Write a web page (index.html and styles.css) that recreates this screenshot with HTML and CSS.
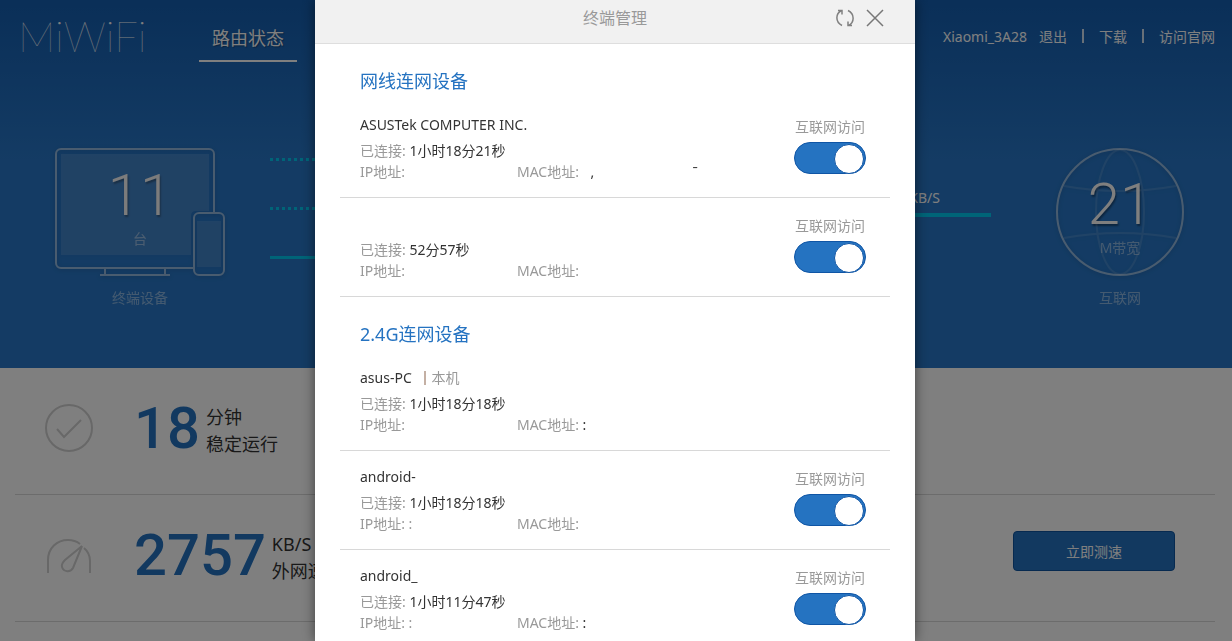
FILE: index.html
```html
<!DOCTYPE html>
<html lang="zh-CN">
<head>
    <meta charset="UTF-8">
    <meta name="viewport" content="width=device-width, initial-scale=1.0">
    <title>小米路由器</title>
    <link rel="stylesheet" href="styles.css">
</head>
<body>

<div class="hero">
    <!-- Header -->
    <header class="header">
        <a class="logo" href="#">MiWiFi</a>
        <nav class="nav">
            <a class="active" href="#">路由状态</a>
        </nav>
        <div class="user-nav">
            <span class="router-name">Xiaomi_3A28</span>
            <a href="#">退出</a>
            <span class="sep"></span>
            <a href="#">下载</a>
            <span class="sep"></span>
            <a href="#">访问官网</a>
        </div>
    </header>

    <!-- Network map -->
    <section class="network">
        <div class="node">
            <div class="figure">
                <svg width="170" height="130" viewBox="0 0 170 130" fill="none" stroke="#fff" stroke-width="2">
                    <g opacity=".5">
                        <path d="M139 120H6a5 5 0 0 1-5-5V6a5 5 0 0 1 5-5h148a5 5 0 0 1 5 5v59"/>
                        <path d="M45 127h70M50 121v6M110 121v6"/>
                        <rect x="139" y="65" width="30" height="62" rx="5"/>
                    </g>
                    <path d="M6 6h148v57h-13q-5 0-5 5v39H6z" fill="#fff" stroke="none" opacity=".12"/>
                    <path d="M142 73h24v46h-24z" fill="#fff" stroke="none" opacity=".12"/>
                </svg>
                <div class="count">
                    <span class="num">11</span>
                    <span class="unit">台</span>
                </div>
            </div>
            <p class="node-label">终端设备</p>
        </div>

        <div class="links">
            <div class="link-types">
                <span class="link dotted"></span>
                <span class="link dotted"></span>
                <span class="link"></span>
            </div>
            <div class="link-speed">KB/S</div>
        </div>

        <div class="node">
            <div class="figure">
                <svg width="130" height="130" viewBox="0 0 130 130" fill="none" stroke="#fff" stroke-width="2">
                    <circle cx="65" cy="64" r="63" opacity=".5"/>
                    <g opacity=".12">
                        <ellipse cx="65" cy="64" rx="24" ry="62"/>
                        <path d="M9 38q56 10 112 0M9 90q56-10 112 0"/>
                    </g>
                </svg>
                <div class="count low">
                    <span class="num">21</span>
                    <span class="unit">M带宽</span>
                </div>
            </div>
            <p class="node-label">互联网</p>
        </div>
    </section>
</div>

<!-- Stats -->
<main class="stats">
    <div class="stat">
        <svg class="stat-icon" width="48" height="48" viewBox="0 0 48 48" fill="none" stroke="#d0d0d0" stroke-width="2">
            <circle cx="24" cy="24" r="23"/>
            <path d="M12 25l7 8 17-17"/>
        </svg>
        <strong class="stat-num">18</strong>
        <p class="stat-text">分钟<br>稳定运行</p>
    </div>
    <div class="stat">
        <svg class="stat-icon" width="48" height="48" viewBox="0 0 48 48" fill="none" stroke="#d0d0d0" stroke-width="2">
            <path d="M3 42V29C3 17 12 9 23 9q7 0 12 4M39 17q6 5 6 13v12"/>
            <path d="M37 15L20 29q-4 4-3 7a6 6 0 0 0 11 1z"/>
        </svg>
        <strong class="stat-num">2757</strong>
        <p class="stat-text">KB/S<br>外网速度</p>
        <div class="stat-action">
            <button class="btn" type="button">立即测速</button>
        </div>
    </div>
</main>

<!-- Device dialog -->
<div class="overlay">
    <div class="dialog" role="dialog" aria-labelledby="dialog-title">
        <div class="dialog-header">
            <h2 id="dialog-title">终端管理</h2>
            <div class="dialog-tools">
                <button type="button" aria-label="刷新">
                    <svg width="18" height="18" viewBox="0 0 18 18" fill="none" stroke="#808080" stroke-width="1.5">
                        <path d="M6 16.500C-1 13-.5 4.500 5.500 1.500M2 1.500h4v4"/>
                        <path d="M12 1.500C19 5 18.500 13.500 12.500 16.500M16 16.500h-4v-4"/>
                    </svg>
                </button>
                <button type="button" aria-label="关闭">
                    <svg width="18" height="18" viewBox="0 0 18 18" fill="none" stroke="#777" stroke-width="1.500">
                        <path d="M1 1l16 16M17 1L1 17"/>
                    </svg>
                </button>
            </div>
        </div>

        <div class="dialog-body">
            <h3>网线连网设备</h3>
            <ul class="devices">
                <li class="device">
                    <div class="info">
                        <p class="name">ASUSTek COMPUTER INC.</p>
                        <p>已连接: <b>1小时18分21秒</b></p>
                        <p class="addr"><span>IP地址:</span><span>MAC地址: <b class="mac"><i>,</i><i>ˉ</i></b></span></p>
                    </div>
                    <label class="access">互联网访问<input class="switch" type="checkbox" checked></label>
                </li>
                <li class="device">
                    <div class="info">
                        <p class="name"></p>
                        <p>已连接: <b>52分57秒</b></p>
                        <p class="addr"><span>IP地址:</span><span>MAC地址:</span></p>
                    </div>
                    <label class="access">互联网访问<input class="switch" type="checkbox" checked></label>
                </li>
            </ul>

            <h3>2.4G连网设备</h3>
            <ul class="devices">
                <li class="device">
                    <div class="info">
                        <p class="name">asus-PC <span class="self">本机</span></p>
                        <p>已连接: <b>1小时18分18秒</b></p>
                        <p class="addr"><span>IP地址:</span><span>MAC地址: <b>:</b></span></p>
                    </div>
                </li>
                <li class="device">
                    <div class="info">
                        <p class="name">android-</p>
                        <p>已连接: <b>1小时18分18秒</b></p>
                        <p class="addr"><span>IP地址: :</span><span>MAC地址:</span></p>
                    </div>
                    <label class="access">互联网访问<input class="switch" type="checkbox" checked></label>
                </li>
                <li class="device">
                    <div class="info">
                        <p class="name">android_</p>
                        <p>已连接: <b>1小时11分47秒</b></p>
                        <p class="addr"><span>IP地址: :</span><span>MAC地址: <b>:</b></span></p>
                    </div>
                    <label class="access">互联网访问<input class="switch" type="checkbox" checked></label>
                </li>
            </ul>
        </div>
    </div>
</div>

</body>
</html>
```

FILE: styles.css
```css
/* Basic Reset */
* {
    margin: 0;
    padding: 0;
    box-sizing: border-box;
}
body {
    font-family: "Noto Sans", "Noto Sans CJK SC", sans-serif;
    font-size: 14px;
    color: #333;
    background: #fff;
}
a {
    color: inherit;
    text-decoration: none;
}
ul {
    list-style: none;
}
button {
    font: inherit;
    border: none;
    background: none;
    cursor: pointer;
}
svg {
    display: block;
}

/* Hero */
.hero {
    min-height: 368px;
    padding: 0 17px 0 15px;
    color: #fff;
    background: #2877c8 linear-gradient(#145eb0, #2877c8) no-repeat;
    background-size: 100% 160px;
}
.header {
    display: flex;
    height: 80px;
}
.logo {
    width: 184px;
    padding-left: 3px;
    font-family: Lato, sans-serif;
    font-size: 42px;
    font-weight: 200;
    line-height: 72px;
}
.nav a {
    display: block;
    padding: 24px 13px 8px;
    font-size: 18px;
    line-height: 28px;
    text-shadow: 1px 1px 1px rgba(0, 0, 0, 0.3);
}
.nav .active {
    border-bottom: 2px solid #fff;
}
.user-nav {
    display: flex;
    align-items: center;
    height: 72px;
    margin-left: auto;
}
.router-name {
    margin-right: 12px;
}
.sep {
    width: 2px;
    height: 14px;
    margin: 0 15px;
    background: #fff;
    opacity: 0.8;
}

/* Network map */
.network {
    display: grid;
    grid-template-columns: 250px 1fr 190px;
    padding-top: 68px;
}
.node {
    text-align: center;
}
.figure {
    display: grid;
    justify-items: center;
}
.figure > * {
    grid-area: 1 / 1;
}
.figure svg {
    filter: drop-shadow(0 1px 2px rgba(0, 0, 0, 0.3));
}
.count {
    display: flex;
    flex-direction: column;
    gap: 4px;
    padding-top: 17px;
}
.count.low {
    padding-top: 26px;
}
.num {
    font-family: Roboto, sans-serif;
    font-size: 58px;
    font-weight: 300;
    line-height: 60px;
    text-shadow: 1px 2px 2px rgba(0, 0, 0, 0.4);
}
.unit {
    line-height: 20px;
    opacity: 0.45;
}
.node-label {
    margin-top: 9px;
    line-height: 22px;
    opacity: 0.45;
}
.links {
    display: flex;
    justify-content: space-between;
    align-items: flex-start;
    padding: 10px 34px 0 5px;
}
.link-types {
    display: grid;
    gap: 46px;
    width: 160px;
}
.link {
    height: 3px;
    background: #00c8f0;
}
.link.dotted {
    background: repeating-linear-gradient(90deg, #00c8f0 0 3px, transparent 3px 6px);
}
.link-speed {
    width: 160px;
    margin-top: 29px;
    padding: 0 51px 4px 0;
    line-height: 22px;
    text-align: right;
    border-bottom: 4px solid #00c8f0;
}

/* Stats */
.stats {
    padding: 0 17px 0 15px;
}
.stat {
    display: flex;
    align-items: center;
    height: 127px;
    padding: 0 40px 6px 30px;
    border-bottom: 1px solid #d8d8d8;
}
.stat-icon {
    margin-right: 41px;
}
.stat-num {
    margin-right: 6px;
    font-family: Roboto, sans-serif;
    font-size: 58px;
    font-weight: 500;
    line-height: 60px;
    color: #2573c1;
}
.stat-text {
    padding-top: 6px;
    font-size: 18px;
    line-height: 27px;
}
.stat-action {
    margin-left: auto;
    padding-bottom: 8px;
}
.btn {
    width: 162px;
    height: 40px;
    color: #fff;
    background: #2573c1;
    border: 1px solid #0f55a0;
    border-radius: 4px;
}

/* Dialog */
.overlay {
    position: fixed;
    inset: 0;
    display: flex;
    justify-content: center;
    padding-right: 2px;
    background: rgba(0, 0, 0, 0.5);
}
.dialog {
    display: flex;
    flex-direction: column;
    width: 600px;
    max-width: 100%;
    background: #fff;
    box-shadow: 0 0 12px rgba(0, 0, 0, 0.5);
}
.dialog-header {
    display: grid;
    grid-template-columns: 1fr auto 1fr;
    align-items: center;
    height: 44px;
    padding: 0 31px 7px;
    background: #f1f1f1;
    border-bottom: 1px solid #dedede;
}
.dialog-header h2 {
    grid-column: 2;
    font-size: 16px;
    font-weight: 400;
    line-height: 22px;
    color: #999;
}
.dialog-tools {
    display: flex;
    justify-content: flex-end;
    gap: 12px;
}
.dialog-body {
    flex: 1;
    min-height: 0;
    padding: 0 25px;
    overflow-y: auto;
    scrollbar-width: none;
}
.dialog-body h3 {
    padding: 24px 20px 4px;
    font-size: 18px;
    font-weight: 400;
    line-height: 27px;
    color: #2573c1;
}
.device {
    display: flex;
    justify-content: space-between;
    align-items: flex-start;
    padding: 15px 24px 15px 20px;
    line-height: 21px;
    color: #999;
    border-bottom: 1px solid #d8d8d8;
}
.device b {
    font-weight: 400;
    color: #333;
}
.device i {
    font-style: normal;
}
.name {
    min-height: 21px;
    margin-bottom: 5px;
    color: #333;
}
.self {
    color: #999;
}
.self::before {
    content: "";
    display: inline-block;
    width: 2px;
    height: 14px;
    margin: 0 5px 0 9px;
    vertical-align: -2px;
    background: #c4b0a4;
}
.addr {
    display: grid;
    grid-template-columns: 157px auto;
}
.mac {
    display: inline-flex;
    gap: 98px;
    padding-left: 8px;
}
.access {
    display: grid;
    gap: 5px;
    justify-items: center;
    padding-top: 2px;
}

/* Toggle switch */
.switch {
    appearance: none;
    width: 72px;
    height: 32px;
    padding: 1px;
    background: #ccc;
    border: 1px solid #bbb;
    border-radius: 16px;
    cursor: pointer;
}
.switch::before {
    content: "";
    display: block;
    width: 28px;
    height: 28px;
    background: #fff;
    border: 1px solid #0f55a5;
    border-radius: 50%;
}
.switch:checked {
    background: #2573c1;
    border-color: #0f55a5;
}
.switch:checked::before {
    margin-left: auto;
}
```
